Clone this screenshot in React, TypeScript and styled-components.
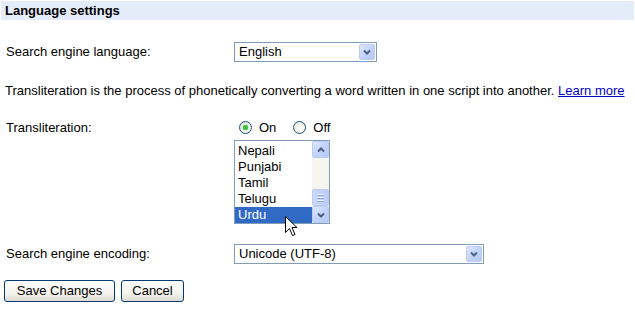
import React from "react";
import styled, { createGlobalStyle } from "styled-components";

const Global = createGlobalStyle`
  html, body { margin: 0; padding: 0; background: #fff; }
  body { font-family: "Liberation Sans", Arial, sans-serif; font-size: 13px; color: #000; }
`;

const Page = styled.div`
  position: relative;
  width: 635px;
  height: 314px;
  padding: 1px 1px 0 1px;
  box-sizing: border-box;
`;

const Header = styled.div`
  height: 19px;
  background: #e5ecf9;
  font-weight: bold;
  font-size: 13px;
  line-height: 19px;
  padding-left: 4px;
`;

const Row = styled.div<{ $top: number; $align?: string }>`
  display: grid;
  grid-template-columns: 228px 1fr;
  align-items: ${(p) => p.$align || "center"};
  margin-top: ${(p) => p.$top}px;
  padding-left: 5px;
`;

const Label = styled.div`
  line-height: 16px;
`;

const Para = styled.p`
  margin: 21px 0 0 0;
  padding-left: 4px;
  line-height: 16px;
  white-space: nowrap;
`;

const Link = styled.a`
  color: #0000cc;
  text-decoration: underline;
`;

const SelectBox = styled.div<{ $w: number }>`
  width: ${(p) => p.$w}px;
  height: 20px;
  box-sizing: border-box;
  border: 1px solid #7f9db9;
  background: #fff;
  display: flex;
  align-items: center;
  justify-content: space-between;
  padding: 1px;
`;

const SelectText = styled.span`
  padding-left: 3px;
  color: #000;
  line-height: 16px;
`;

const ArrowBtn = styled.div`
  width: 16px;
  height: 16px;
  box-sizing: border-box;
  border: 1px solid #bccbf0;
  border-radius: 2px;
  background: linear-gradient(135deg, #dfe8fd 0%, #c2d3fc 50%, #b5c8f7 100%);
  display: flex;
  align-items: center;
  justify-content: center;
`;

const Chevron = ({ up }: { up?: boolean }) => (
  <svg width="8" height="6" viewBox="0 0 8 6">
    <path
      d={up ? "M1 4.5 L4 1.5 L7 4.5" : "M1 1.5 L4 4.5 L7 1.5"}
      stroke="#4d6185"
      strokeWidth="2"
      fill="none"
    />
  </svg>
);

const Radios = styled.div`
  display: flex;
  align-items: center;
  padding-left: 5px;
`;

const RadioItem = styled.label`
  display: flex;
  align-items: center;
  margin-right: 17px;
`;

const RadioCircle = styled.span<{ $on?: boolean }>`
  width: 13px;
  height: 13px;
  box-sizing: border-box;
  border-radius: 50%;
  border: 1px solid #1c5180;
  background: radial-gradient(circle at 65% 65%, #ffffff 0%, #f0efe6 55%, #dcdbd2 100%);
  margin-right: 7px;
  display: flex;
  align-items: center;
  justify-content: center;
  &::after {
    content: "";
    width: 5px;
    height: 5px;
    border-radius: 50%;
    background: ${(p) => (p.$on ? "#3ec43e" : "transparent")};
    box-shadow: ${(p) => (p.$on ? "0 0 1px #21a121" : "none")};
  }
`;

const ListBox = styled.div`
  width: 96px;
  height: 84px;
  box-sizing: border-box;
  border: 1px solid #7f9db9;
  background: #fff;
  display: flex;
  margin-top: 5px;
`;

const Items = styled.div`
  flex: 1;
  display: flex;
  flex-direction: column;
  justify-content: flex-end;
  overflow: hidden;
`;

const Item = styled.div<{ $sel?: boolean }>`
  height: 16px;
  line-height: 16px;
  padding-left: 3px;
  background: ${(p) => (p.$sel ? "#316ac5" : "transparent")};
  color: ${(p) => (p.$sel ? "#fff" : "#000")};
  flex: none;
`;

const Scroll = styled.div`
  width: 17px;
  background: #f6f5ee;
  display: flex;
  flex-direction: column;
  justify-content: space-between;
`;

const ScrollBtn = styled.div`
  height: 17px;
  box-sizing: border-box;
  border: 1px solid #bccbf0;
  border-radius: 2px;
  background: linear-gradient(135deg, #dfe8fd 0%, #c2d3fc 50%, #b5c8f7 100%);
  display: flex;
  align-items: center;
  justify-content: center;
`;

const Thumb = styled.div`
  height: 17px;
  box-sizing: border-box;
  border: 1px solid #bccbf0;
  border-radius: 2px;
  background: linear-gradient(90deg, #cad8fd 0%, #bccdfa 100%);
  display: flex;
  flex-direction: column;
  align-items: center;
  justify-content: center;
  gap: 1px;
  & > i {
    display: block;
    width: 7px;
    height: 1px;
    background: #eef3fe;
    border-bottom: 1px solid #8ca3e1;
  }
`;

const Track = styled.div`
  flex: 1;
  display: flex;
  flex-direction: column;
  justify-content: flex-end;
`;

const Buttons = styled.div`
  display: flex;
  gap: 6px;
  margin-top: 16px;
  padding-left: 3px;
`;

const Button = styled.button<{ $w: number }>`
  font-family: "Liberation Sans", Arial, sans-serif;
  font-size: 13px;
  color: #000;
  width: ${(p) => p.$w}px;
  height: 22px;
  padding: 0;
  border: 1px solid #003c74;
  border-radius: 3px;
  background: linear-gradient(180deg, #ffffff 0%, #f5f4ef 60%, #dedcd0 100%);
  line-height: 18px;
`;

const Cursor = styled.svg`
  position: absolute;
  left: 285px;
  top: 216px;
`;

export default function App() {
  return (
    <Page>
      <Global />
      <Header>Language settings</Header>
      <Row $top={22}>
        <Label>Search engine language:</Label>
        <SelectBox $w={143}>
          <SelectText>English</SelectText>
          <ArrowBtn>
            <Chevron />
          </ArrowBtn>
        </SelectBox>
      </Row>
      <Para>
        Transliteration is the process of phonetically converting a word written in one script into
        another. <Link href="#">Learn more</Link>
      </Para>
      <Row $top={21} $align="start">
        <Label>Transliteration:</Label>
        <div>
          <Radios>
            <RadioItem>
              <RadioCircle $on />
              On
            </RadioItem>
            <RadioItem>
              <RadioCircle />
              Off
            </RadioItem>
          </Radios>
          <ListBox>
            <Items>
              <Item>Nepali</Item>
              <Item>Punjabi</Item>
              <Item>Tamil</Item>
              <Item>Telugu</Item>
              <Item $sel>Urdu</Item>
            </Items>
            <Scroll>
              <ScrollBtn>
                <Chevron up />
              </ScrollBtn>
              <Track>
                <Thumb>
                  <i />
                  <i />
                  <i />
                </Thumb>
              </Track>
              <ScrollBtn>
                <Chevron />
              </ScrollBtn>
            </Scroll>
          </ListBox>
        </div>
      </Row>
      <Row $top={20}>
        <Label>Search engine encoding:</Label>
        <SelectBox $w={250}>
          <SelectText>Unicode (UTF-8)</SelectText>
          <ArrowBtn>
            <Chevron />
          </ArrowBtn>
        </SelectBox>
      </Row>
      <Buttons>
        <Button $w={111}>Save Changes</Button>
        <Button $w={63}>Cancel</Button>
      </Buttons>
      <Cursor width="14" height="23" viewBox="0 0 14 23">
        <path
          d="M0.5 0.5 L0.5 16.5 L4.5 12.5 L7.5 19.5 L10 18.5 L7 11.5 L12 11.5 Z"
          fill="#fff"
          stroke="#000"
          strokeWidth="1"
        />
      </Cursor>
    </Page>
  );
}
